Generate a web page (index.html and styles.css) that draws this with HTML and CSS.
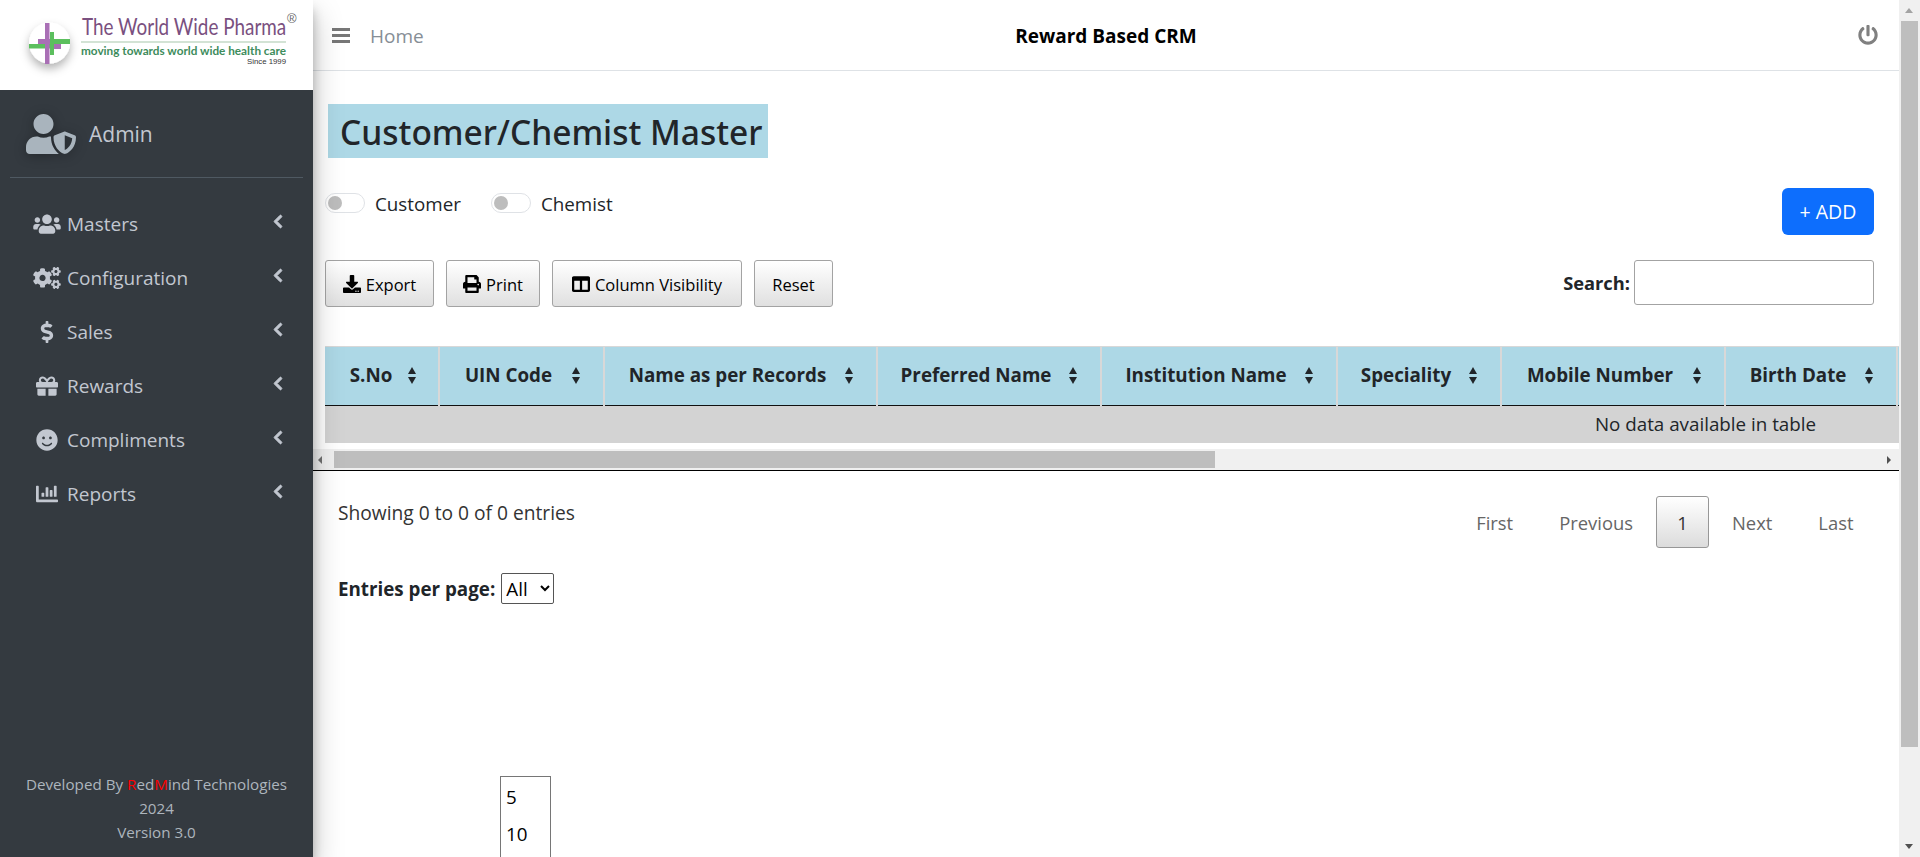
FILE: index.html
```html
<!DOCTYPE html>
<html lang="en">
<head>
    <meta charset="UTF-8">
    <meta name="viewport" content="width=device-width, initial-scale=1.0">
    <title>Customer/Chemist Master</title>
    <link rel="stylesheet" href="styles.css">
</head>
<body>
<div class="app">
    <aside class="sidebar">
        <div class="logo">
            <svg width="313" height="90" viewBox="0 0 313 90">
                <defs>
                    <filter id="logoShadow" x="-40%" y="-40%" width="180%" height="200%"><feDropShadow dx="0" dy="5" stdDeviation="5" flood-color="#000" flood-opacity=".3"/></filter>
                </defs>
                <circle cx="49.5" cy="43" r="20.5" fill="#fff" filter="url(#logoShadow)"/>
                <rect x="38" y="39" width="12" height="5" fill="#a96fb5"/>
                <rect x="50" y="44" width="11" height="5" fill="#a96fb5"/>
                <rect x="50" y="32" width="4" height="23" fill="#5cbf5e"/>
                <rect x="50" y="39" width="20" height="5" fill="#5cbf5e"/>
                <rect x="29" y="44" width="21" height="4.500" fill="#5cbf5e"/>
                <rect x="45" y="23" width="4.500" height="41" fill="#a96fb5"/>
                <text transform="translate(82 34.500) scale(.84 1)" class="logo-name">The World Wide Pharma</text>
                <text x="287" y="23" class="logo-reg">®</text>
                <rect x="81" y="41.500" width="205" height="1" fill="#a7c7ac"/>
                <text x="81" y="55" class="logo-tag" textLength="205" lengthAdjust="spacingAndGlyphs">moving towards world wide health care</text>
                <text x="247" y="64" class="logo-since" textLength="39" lengthAdjust="spacingAndGlyphs">Since 1999</text>
            </svg>
        </div>
        <div class="user">
            <svg class="user-icon" viewBox="0 0 640 512"><path d="M622.3 271.1l-115.2-45c-4.1-1.6-12.6-3.7-22.2 0l-115.2 45c-10.7 4.2-17.7 14-17.7 24.9 0 111.6 68.7 188.8 132.9 213.9 9.6 3.7 18 1.6 22.2 0C558.4 489.9 640 420.5 640 296c0-10.9-7-20.7-17.7-24.9zM496 462.4V273.3l95.5 37.3c-5.6 87.1-60.9 135.4-95.5 151.8zM224 256c70.7 0 128-57.3 128-128S294.7 0 224 0 96 57.3 96 128s57.3 128 128 128zm96 40c0-2.5.8-4.7 1.1-7.2-2.5-.1-4.9-.8-7.5-.8h-16.7c-22.2 10.2-46.9 16-72.9 16s-50.6-5.8-72.9-16h-16.7C60.2 288 0 348.2 0 422.4V464c0 26.5 21.5 48 48 48h352c6.8 0 13.3-1.5 19.2-4-54-42.9-99.2-116.7-99.2-212z"/></svg>
            <span>Admin</span>
        </div>
        <ul class="nav">
            <li>
                <svg class="nav-icon" viewBox="0 0 640 512"><path d="M96 224c35.3 0 64-28.7 64-64s-28.7-64-64-64-64 28.7-64 64 28.7 64 64 64zm448 0c35.3 0 64-28.7 64-64s-28.7-64-64-64-64 28.7-64 64 28.7 64 64 64zm32 32h-64c-17.6 0-33.5 7.1-45.1 18.6 40.3 22.1 68.9 62 75.1 109.4h66c17.7 0 32-14.3 32-32v-32c0-35.3-28.7-64-64-64zm-256 0c61.9 0 112-50.1 112-112S381.9 32 320 32 208 82.1 208 144s50.1 112 112 112zm76.8 32h-8.3c-20.8 10-43.9 16-68.5 16s-47.6-6-68.5-16h-8.3C179.6 288 128 339.6 128 403.2V432c0 26.5 21.5 48 48 48h288c26.5 0 48-21.5 48-48v-28.8c0-63.6-51.6-115.2-115.2-115.2zm-223.7-13.4C161.5 263.1 145.6 256 128 256H64c-35.3 0-64 28.7-64 64v32c0 17.7 14.3 32 32 32h65.9c6.3-47.4 34.9-87.3 75.2-109.4z"/></svg>
                <span>Masters</span>
                <svg class="chev" viewBox="0 0 320 512"><path d="M34.52 239.03L228.87 44.69c9.37-9.37 24.57-9.37 33.94 0l22.67 22.67c9.36 9.36 9.37 24.52.04 33.9L131.49 256l154.02 154.75c9.34 9.38 9.32 24.54-.04 33.9l-22.67 22.67c-9.37 9.37-24.57 9.37-33.94 0L34.52 272.97c-9.37-9.37-9.37-24.57 0-33.94z"/></svg>
            </li>
            <li>
                <svg class="nav-icon" viewBox="0 0 640 512"><path d="M512.1 191l-8.2 14.3c-3 5.3-9.4 7.5-15.1 5.4-11.8-4.4-22.6-10.7-32.1-18.6-4.6-3.8-5.8-10.5-2.8-15.7l8.2-14.3c-6.9-8-12.3-17.3-15.9-27.4h-16.5c-6 0-11.2-4.3-12.2-10.3-2-12-2.1-24.6 0-37.1 1-6 6.2-10.4 12.2-10.4h16.5c3.6-10.1 9-19.4 15.9-27.4l-8.2-14.3c-3-5.2-1.9-11.9 2.8-15.7 9.5-7.9 20.4-14.2 32.1-18.6 5.7-2.1 12.1.1 15.1 5.4l8.2 14.3c10.5-1.9 21.2-1.9 31.7 0L552 6.3c3-5.3 9.4-7.5 15.1-5.4 11.8 4.4 22.6 10.7 32.1 18.6 4.6 3.8 5.8 10.5 2.8 15.7l-8.2 14.3c6.9 8 12.3 17.3 15.9 27.4h16.5c6 0 11.2 4.3 12.2 10.3 2 12 2.1 24.6 0 37.1-1 6-6.2 10.4-12.2 10.4h-16.5c-3.6 10.1-9 19.4-15.9 27.4l8.2 14.3c3 5.2 1.9 11.9-2.8 15.7-9.5 7.9-20.4 14.2-32.1 18.6-5.7 2.1-12.1-.1-15.1-5.4l-8.2-14.3c-10.4 1.9-21.2 1.9-31.7 0zm-10.5-58.8c38.5 29.6 82.4-14.3 52.8-52.8-38.5-29.7-82.4 14.3-52.8 52.8zM386.3 286.1l33.7 16.8c10.1 5.8 14.5 18.1 10.5 29.1-8.9 24.2-26.4 46.4-42.6 65.8-7.4 8.9-20.2 11.1-30.3 5.3l-29.1-16.8c-16 13.7-34.6 24.6-54.9 31.7v33.6c0 11.6-8.3 21.6-19.7 23.6-24.6 4.2-50.4 4.4-75.9 0-11.5-2-20-11.9-20-23.6V418c-20.3-7.2-38.9-18-54.9-31.7L74 403c-10 5.8-22.9 3.6-30.3-5.3-16.2-19.4-33.3-41.6-42.2-65.7-4-10.9.4-23.2 10.5-29.1l33.3-16.8c-3.9-20.9-3.9-42.4 0-63.4L12 205.8c-10.1-5.8-14.6-18.1-10.5-29 8.9-24.2 26-46.4 42.2-65.8 7.4-8.9 20.2-11.1 30.3-5.3l29.1 16.8c16-13.7 34.6-24.6 54.9-31.7V57.1c0-11.5 8.2-21.5 19.6-23.5 24.6-4.2 50.5-4.4 76-.1 11.5 2 20 11.9 20 23.6v33.6c20.3 7.2 38.9 18 54.9 31.7l29.1-16.8c10-5.8 22.9-3.6 30.3 5.3 16.2 19.4 33.2 41.6 42.1 65.8 4 10.9.1 23.2-10 29.1l-33.7 16.8c3.9 21 3.9 42.5 0 63.5zm-117.6 21.1c59.2-77-28.7-164.9-105.7-105.7-59.2 77 28.7 164.9 105.7 105.7zm243.4 182.7l-8.2 14.3c-3 5.3-9.4 7.5-15.1 5.4-11.8-4.4-22.6-10.7-32.1-18.6-4.6-3.8-5.8-10.5-2.8-15.7l8.2-14.3c-6.9-8-12.3-17.3-15.9-27.4h-16.5c-6 0-11.2-4.3-12.2-10.3-2-12-2.1-24.6 0-37.1 1-6 6.2-10.4 12.2-10.4h16.5c3.6-10.1 9-19.4 15.9-27.4l-8.2-14.3c-3-5.2-1.9-11.9 2.8-15.7 9.5-7.9 20.4-14.2 32.1-18.6 5.7-2.1 12.1.1 15.1 5.4l8.2 14.3c10.5-1.9 21.2-1.9 31.7 0l8.2-14.3c3-5.3 9.4-7.5 15.1-5.4 11.8 4.4 22.6 10.7 32.1 18.6 4.6 3.8 5.8 10.5 2.8 15.7l-8.2 14.3c6.9 8 12.3 17.3 15.9 27.4h16.5c6 0 11.2 4.3 12.2 10.3 2 12 2.1 24.6 0 37.1-1 6-6.2 10.4-12.2 10.4h-16.5c-3.6 10.1-9 19.4-15.9 27.4l8.2 14.3c3 5.2 1.9 11.9-2.8 15.7-9.5 7.9-20.4 14.2-32.1 18.6-5.7 2.1-12.1-.1-15.1-5.4l-8.2-14.3c-10.4 1.9-21.2 1.9-31.7 0zM501.6 431c38.5 29.6 82.4-14.3 52.8-52.8-38.5-29.6-82.4 14.3-52.8 52.8z"/></svg>
                <span>Configuration</span>
                <svg class="chev" viewBox="0 0 320 512"><path d="M34.52 239.03L228.87 44.69c9.37-9.37 24.57-9.37 33.94 0l22.67 22.67c9.36 9.36 9.37 24.52.04 33.9L131.49 256l154.02 154.75c9.34 9.38 9.32 24.54-.04 33.9l-22.67 22.67c-9.37 9.37-24.57 9.37-33.94 0L34.52 272.97c-9.37-9.37-9.37-24.57 0-33.94z"/></svg>
            </li>
            <li>
                <svg class="nav-icon" viewBox="-176 0 640 512"><path d="M209.2 233.4l-108-31.6C88.7 198.2 80 186.5 80 173.5c0-16.3 13.2-29.5 29.5-29.5h66.3c12.2 0 24.2 3.7 34.2 10.5 6.1 4.1 14.3 3.1 19.5-2l34.8-34c7.1-6.9 6.1-18.4-1.8-24.5C238 74.8 207.4 64.1 176 64V16c0-8.8-7.2-16-16-16h-32c-8.8 0-16 7.2-16 16v48h-2.5C45.8 64-5.4 118.7.5 183.6c4.2 46.1 39.4 83.6 83.8 96.6l102.5 30c12.5 3.7 21.2 15.3 21.2 28.3 0 16.3-13.2 29.500-29.500 29.500h-66.3C100 368 88 364.3 78 357.5c-6.1-4.1-14.3-3.1-19.5 2l-34.8 34c-7.1 6.9-6.1 18.4 1.800 24.5 24.5 19.2 55.1 29.9 86.5 30v48c0 8.8 7.2 16 16 16h32c8.8 0 16-7.2 16-16v-48.2c46.6-.9 90.3-28.6 105.7-72.7 21.5-61.6-14.6-124.8-72.5-141.7z"/></svg>
                <span>Sales</span>
                <svg class="chev" viewBox="0 0 320 512"><path d="M34.52 239.03L228.87 44.69c9.37-9.37 24.57-9.37 33.94 0l22.67 22.67c9.36 9.36 9.37 24.52.04 33.9L131.49 256l154.02 154.75c9.34 9.38 9.32 24.54-.04 33.9l-22.67 22.67c-9.37 9.37-24.57 9.37-33.94 0L34.52 272.97c-9.37-9.37-9.37-24.57 0-33.94z"/></svg>
            </li>
            <li>
                <svg class="nav-icon" viewBox="-64 0 640 512"><path d="M32 448c0 17.7 14.3 32 32 32h160V320H32v128zm256 32h160c17.7 0 32-14.3 32-32V320H288v160zm192-320h-42.1c6.2-12.1 10.1-25.5 10.1-40 0-48.5-39.5-88-88-88-41.6 0-68.5 21.3-103 68.3-34.5-47-61.4-68.3-103-68.3-48.5 0-88 39.5-88 88 0 14.5 3.8 27.9 10.1 40H32c-17.7 0-32 14.3-32 32v80c0 8.8 7.2 16 16 16h480c8.8 0 16-7.2 16-16v-80c0-17.7-14.3-32-32-32zm-326.1 0c-22.1 0-40-17.9-40-40s17.9-40 40-40c19.9 0 34.6 3.3 86.1 80h-86.1zm206.1 0h-86.1c51.4-76.5 65.7-80 86.1-80 22.1 0 40 17.9 40 40s-17.9 40-40 40z"/></svg>
                <span>Rewards</span>
                <svg class="chev" viewBox="0 0 320 512"><path d="M34.52 239.03L228.87 44.69c9.37-9.37 24.57-9.37 33.94 0l22.67 22.67c9.36 9.36 9.37 24.52.04 33.9L131.49 256l154.02 154.75c9.34 9.38 9.32 24.54-.04 33.9l-22.67 22.67c-9.37 9.37-24.57 9.37-33.94 0L34.52 272.97c-9.37-9.37-9.37-24.57 0-33.94z"/></svg>
            </li>
            <li>
                <svg class="nav-icon" viewBox="-72 0 640 512"><path d="M248 8C111 8 0 119 0 256s111 248 248 248 248-111 248-248S385 8 248 8zm80 168c17.7 0 32 14.3 32 32s-14.3 32-32 32-32-14.3-32-32 14.3-32 32-32zm-160 0c17.7 0 32 14.3 32 32s-14.3 32-32 32-32-14.3-32-32 14.3-32 32-32zm194.8 170.2C334.3 380.4 292.5 400 248 400s-86.3-19.6-114.8-53.8c-13.6-16.3 11-36.7 24.6-20.5 22.4 26.9 55.2 42.2 90.2 42.2s67.8-15.4 90.2-42.2c13.4-16.2 38.1 4.2 24.6 20.5z"/></svg>
                <span>Compliments</span>
                <svg class="chev" viewBox="0 0 320 512"><path d="M34.52 239.03L228.87 44.69c9.37-9.37 24.57-9.37 33.94 0l22.67 22.67c9.36 9.36 9.37 24.52.04 33.9L131.49 256l154.02 154.75c9.34 9.38 9.32 24.54-.04 33.9l-22.67 22.67c-9.37 9.37-24.57 9.37-33.94 0L34.52 272.97c-9.37-9.37-9.37-24.57 0-33.94z"/></svg>
            </li>
            <li>
                <svg class="nav-icon" viewBox="-64 0 640 512"><path d="M332.8 320h38.4c6.4 0 12.8-6.4 12.8-12.8V172.8c0-6.4-6.4-12.8-12.8-12.8h-38.4c-6.4 0-12.8 6.4-12.8 12.8v134.4c0 6.4 6.4 12.8 12.8 12.8zm96 0h38.4c6.4 0 12.8-6.4 12.8-12.8V76.8c0-6.4-6.4-12.8-12.8-12.8h-38.4c-6.4 0-12.8 6.4-12.8 12.8v230.4c0 6.4 6.4 12.8 12.8 12.8zm-288 0h38.4c6.4 0 12.8-6.4 12.8-12.8v-70.4c0-6.4-6.4-12.8-12.8-12.8h-38.4c-6.4 0-12.8 6.4-12.8 12.8v70.4c0 6.4 6.4 12.8 12.8 12.8zm96 0h38.4c6.4 0 12.8-6.4 12.8-12.8V108.8c0-6.4-6.4-12.8-12.8-12.8h-38.4c-6.4 0-12.8 6.4-12.8 12.8v198.4c0 6.4 6.4 12.8 12.8 12.8zM496 384H64V80c0-8.84-7.16-16-16-16H16C7.16 64 0 71.16 0 80v336c0 17.67 14.33 32 32 32h464c8.84 0 16-7.16 16-16v-32c0-8.84-7.16-16-16-16z"/></svg>
                <span>Reports</span>
                <svg class="chev" viewBox="0 0 320 512"><path d="M34.52 239.03L228.87 44.69c9.37-9.37 24.57-9.37 33.94 0l22.67 22.67c9.36 9.36 9.37 24.52.04 33.9L131.49 256l154.02 154.75c9.34 9.38 9.32 24.54-.04 33.9l-22.67 22.67c-9.37 9.37-24.57 9.37-33.94 0L34.52 272.97c-9.37-9.37-9.37-24.57 0-33.94z"/></svg>
            </li>
        </ul>
        <div class="credits">
            <div>Developed By <b>R</b>ed<b>M</b>ind Technologies</div>
            <div>2024</div>
            <div>Version 3.0</div>
        </div>
    </aside>

    <main class="main">
        <div class="topbar">
            <svg class="bars" viewBox="0 0 18 15"><rect width="18" height="3"/><rect y="6" width="18" height="3"/><rect y="12" width="18" height="3"/></svg>
            <span class="home">Home</span>
            <span class="crm">Reward Based CRM</span>
            <svg class="power" viewBox="0 0 512 512"><path d="M400 54.1c63 45 104 118.6 104 201.9 0 136.8-110.8 247.7-247.5 248C120 504.3 8.2 393 8 256.4 7.9 173.1 48.9 99.3 111.8 54.2c11.7-8.3 28-4.8 35 7.7L162.6 90c5.9 10.5 3.1 23.8-6.6 31-41.5 30.8-68 79.6-68 134.9-.1 92.3 74.5 168.1 168 168.1 91.6 0 168.6-74.2 168-169.1-.3-51.8-24.7-101.8-68.1-134-9.7-7.2-12.4-20.5-6.5-30.9l15.8-28.1c7-12.4 23.2-16.1 34.8-7.8zM296 264V24c0-13.3-10.7-24-24-24h-32c-13.3 0-24 10.7-24 24v240c0 13.3 10.7 24 24 24h32c13.3 0 24-10.7 24-24z"/></svg>
        </div>

        <div class="title-row"><h2 class="title">Customer/Chemist Master</h2></div>

        <div class="filter-row">
            <label class="check"><span class="toggle"></span>Customer</label>
            <label class="check"><span class="toggle"></span>Chemist</label>
            <button class="add-btn">+ ADD</button>
        </div>

        <div class="tools-row">
            <button class="dt-btn btn-export">
                <svg viewBox="0 0 512 512"><path d="M216 0h80c13.3 0 24 10.7 24 24v168h87.7c17.8 0 26.7 21.5 14.1 34.1L269.7 378.3c-7.5 7.5-19.8 7.5-27.3 0L90.1 226.1c-12.6-12.6-3.7-34.1 14.1-34.1H192V24c0-13.3 10.7-24 24-24zm296 376v112c0 13.3-10.7 24-24 24H24c-13.3 0-24-10.7-24-24V376c0-13.3 10.7-24 24-24h146.7l49 49c20.1 20.1 52.5 20.1 72.6 0l49-49H488c13.3 0 24 10.7 24 24zm-124 88c0-11-9-20-20-20s-20 9-20 20 9 20 20 20 20-9 20-20zm64 0c0-11-9-20-20-20s-20 9-20 20 9 20 20 20 20-9 20-20z"/></svg>
                Export
            </button>
            <button class="dt-btn btn-print">
                <svg viewBox="0 0 512 512"><path d="M448 192V77.25c0-8.49-3.37-16.62-9.37-22.63L393.37 9.37c-6-6-14.14-9.37-22.63-9.37H96C78.33 0 64 14.33 64 32v160c-35.35 0-64 28.65-64 64v112c0 8.84 7.16 16 16 16h48v96c0 17.67 14.33 32 32 32h320c17.67 0 32-14.33 32-32v-96h48c8.84 0 16-7.16 16-16V256c0-35.35-28.65-64-64-64zm-64 256H128v-96h256v96zm0-224H128V64h192v48c0 8.84 7.16 16 16 16h48v96zm48 72c-13.25 0-24-10.75-24-24 0-13.26 10.75-24 24-24s24 10.74 24 24c0 13.25-10.75 24-24 24z"/></svg>
                Print
            </button>
            <button class="dt-btn btn-cols">
                <svg viewBox="0 0 512 512"><path d="M464 32H48C21.49 32 0 53.49 0 80v352c0 26.51 21.49 48 48 48h416c26.51 0 48-21.49 48-48V80c0-26.51-21.49-48-48-48zM224 416H64V160h160v256zm224 0H288V160h160v256z"/></svg>
                Column Visibility
            </button>
            <button class="dt-btn btn-reset">Reset</button>
            <label class="search"><b>Search:</b><input type="text"></label>
        </div>

        <div class="table-area">
            <table class="grid">
                <thead>
                    <tr>
                        <th class="c-sno">S.No<i class="sort"></i></th>
                        <th class="c-uin">UIN Code<i class="sort"></i></th>
                        <th class="c-name">Name as per Records<i class="sort"></i></th>
                        <th class="c-pref">Preferred Name<i class="sort"></i></th>
                        <th class="c-inst">Institution Name<i class="sort"></i></th>
                        <th class="c-spec">Speciality<i class="sort"></i></th>
                        <th class="c-mob">Mobile Number<i class="sort"></i></th>
                        <th class="c-birth">Birth Date<i class="sort"></i></th>
                        <th class="c-rest"></th>
                    </tr>
                </thead>
                <tbody>
                    <tr><td colspan="9">No data available in table</td></tr>
                </tbody>
            </table>
        </div>
        <div class="h-scroll">
            <i class="arrow arrow-left"></i>
            <div class="h-thumb"></div>
            <i class="arrow arrow-right"></i>
        </div>

        <div class="info-row">
            <span class="info">Showing 0 to 0 of 0 entries</span>
            <div class="pager">
                <a>First</a>
                <a>Previous</a>
                <a class="current">1</a>
                <a>Next</a>
                <a>Last</a>
            </div>
        </div>

        <div class="length-row">
            <b>Entries per page:</b>
            <select class="length-select"><option>All</option></select>
        </div>

        <ul class="length-list">
            <li>5</li>
            <li>10</li>
        </ul>
    </main>

    <div class="v-scroll">
        <i class="arrow arrow-up"></i>
        <div class="v-thumb"></div>
        <i class="arrow arrow-down"></i>
    </div>
</div>
</body>
</html>
```

FILE: styles.css
```css
* { box-sizing: border-box; }
html, body { margin: 0; height: 100%; overflow: hidden; }
body { font-family: "Open Sans", "Noto Sans", sans-serif; font-size: 18.8px; color: #212529; background: #fff; }
ul { list-style: none; margin: 0; padding: 0; }

.app { display: flex; height: 857px; overflow: hidden; }

/* sidebar */
.sidebar { width: 313px; flex: none; display: flex; flex-direction: column; background: #343a40; position: relative; z-index: 2; box-shadow: 0 14px 28px rgba(0,0,0,.25), 0 10px 10px rgba(0,0,0,.22); }
.logo { height: 90px; background: #fff; }
.logo svg { display: block; }
.logo-name { font-family: Lato, sans-serif; font-size: 22.5px; font-weight: 400; fill: #7a5080; }
.logo-reg { font-family: "Liberation Sans", sans-serif; font-size: 13px; fill: #666; }
.logo-tag { font-family: Lato, sans-serif; font-size: 10.5px; font-weight: 700; fill: #3d8c5c; }
.logo-since { font-family: "Liberation Sans", sans-serif; font-size: 8px; fill: #333; }
.user { height: 88px; margin: 0 10px; padding-left: 16px; border-bottom: 1px solid #4f5962; display: flex; align-items: center; gap: 13px; color: #c2c7d0; font-size: 21px; }
.user-icon { width: 50px; height: 40px; fill: #a9b4bd; filter: drop-shadow(0 2px 6px rgba(0,0,0,.3)); }
.nav { padding-top: 19px; }
.nav li { height: 54px; padding: 0 30px 0 33px; display: flex; align-items: center; color: #c2c7d0; font-size: 19px; }
.nav-icon { width: 28px; height: 22px; flex: none; fill: #c2c7d0; margin-right: 6px; }
.nav li span { flex: 1; }
.chev { width: 10px; height: 15px; fill: #c2c7d0; stroke: #c2c7d0; stroke-width: 30; margin-top: -5px; }
.credits { margin-top: auto; padding-bottom: 13px; text-align: center; font-size: 15.2px; line-height: 24px; color: #adb5bd; }
.credits b { font-weight: 400; color: #f00; }

/* main */
.main { flex: 1; min-width: 0; overflow: hidden; }
.topbar { height: 71px; padding: 0 21px 0 19px; border-bottom: 1px solid #dee2e6; display: flex; align-items: center; position: relative; }
.bars { width: 18px; height: 15px; fill: #777; }
.home { margin-left: 20px; padding-top: 2px; font-size: 19px; color: #868e96; }
.crm { position: absolute; left: 0; right: 0; padding-top: 2px; text-align: center; font-weight: 700; font-size: 19px; color: #000; }
.power { width: 20px; height: 20px; margin-left: auto; fill: #808080; }

.title-row { padding: 33px 0 0 15px; }
.title { display: inline-block; margin: 0; width: 440px; height: 54px; padding: 0 12px; background: #add8e6; font-family: "Noto Sans", sans-serif; font-size: 33.5px; font-weight: 500; line-height: 56px; white-space: nowrap; }

.filter-row { margin-top: 30px; padding: 0 25px 0 12px; display: flex; align-items: flex-start; height: 47px; }
.check { display: flex; align-items: center; gap: 10px; margin: 5px 30px 0 0; height: 22px; }
.toggle { width: 40px; height: 20px; margin-top: -2px; border: 1px solid #dfe2e6; border-radius: 10px; background: #fff; position: relative; }
.toggle::before { content: ""; position: absolute; left: 2px; top: 2px; width: 14px; height: 14px; border-radius: 50%; background: #bdbdbd; }
.add-btn { margin-left: auto; width: 92px; height: 47px; border: 0; border-radius: 6px; background: #0d6efd; color: #fff; font: inherit; font-size: 19.5px; }

.tools-row { margin-top: 25px; padding: 0 25px 0 12px; display: flex; align-items: flex-start; height: 47px; }
.dt-btn { height: 47px; margin-right: 12px; padding: 1px 0 0; border: 1px solid #a3a3a3; border-radius: 3px; background: linear-gradient(#fff, #e0e0e0); color: #000; font: inherit; font-size: 16.5px; display: flex; align-items: center; justify-content: center; gap: 5px; }
.dt-btn svg { width: 18px; height: 18px; }
.btn-export { width: 109px; }
.btn-print { width: 94px; }
.btn-cols { width: 190px; }
.btn-reset { width: 79px; margin-right: 0; }
.search { margin-left: auto; display: flex; align-items: center; gap: 4px; height: 45px; }
.search b { font-size: 18.3px; }
.search input { width: 240px; height: 45px; border: 1px solid #a3a3a3; border-radius: 3px; background: #fff; }

/* table */
.table-area { margin-top: 39px; padding-left: 12px; overflow: hidden; height: 103px; }
.grid { width: 2762px; table-layout: fixed; border-collapse: collapse; }
.grid th { height: 59px; padding: 0 38px 2px 12px; position: relative; background: #add8e6; border: 2px solid #d8d8d8; border-width: 1px 2px 0 0; border-bottom: 1px solid #111; font-size: 18.8px; font-weight: 700; text-align: center; white-space: nowrap; }
.grid td { height: 37px; padding: 0; background: #d3d3d3; text-align: center; }
.c-sno { width: 114px; }
.c-uin { width: 165px; }
.c-name { width: 273px; }
.c-pref { width: 224px; }
.c-inst { width: 236px; }
.c-spec { width: 164px; }
.c-mob { width: 224px; }
.c-birth { width: 172px; }
.grid .c-sno { padding-right: 33px; }
.sort { position: absolute; right: 22px; top: 20px; width: 9px; height: 17px; }
.c-sno .sort { right: 21px; }
.sort::before, .sort::after { content: ""; position: absolute; left: 0; border-left: 4.500px solid transparent; border-right: 4.500px solid transparent; }
.sort::before { top: 0; border-bottom: 7px solid #212529; }
.sort::after { bottom: 0; border-top: 7px solid #212529; }

/* scrollbars */
.arrow { position: absolute; width: 0; height: 0; border: 4px solid transparent; }
.h-scroll { height: 22px; background: #f0f0f0; border-bottom: 1px solid #000; position: relative; }
.h-thumb { position: absolute; left: 21px; top: 2px; width: 881px; height: 17px; background: #bebebe; }
.arrow-left { left: 5px; top: 7px; border-right-color: #707070; border-left-width: 0; }
.arrow-right { right: 8px; top: 7px; border-left-color: #505050; border-right-width: 0; }
.v-scroll { width: 21px; flex: none; background: #f0f0f0; position: relative; }
.v-thumb { position: absolute; left: 2px; right: 2px; top: 21px; height: 726px; background: #bebebe; }
.arrow-up { left: 6px; top: 8px; border-width: 0 4.500px 5px; border-bottom-color: #a3a3a3; }
.arrow-down { left: 6px; bottom: 8px; border-width: 5px 4.500px 0; border-top-color: #505050; }

/* below table */
.info-row { margin-top: 25px; padding: 0 22.500px 0 25px; display: flex; justify-content: space-between; align-items: flex-start; height: 52px; }
.info { margin-top: 3px; font-size: 19.2px; color: #333; }
.pager { display: flex; font-size: 18.4px; }
.pager a { height: 52px; padding: 0 22px; display: flex; align-items: center; color: #666; border: 1px solid transparent; border-radius: 3px; }
.pager .current { width: 53px; padding: 0; justify-content: center; color: #333; border-color: #979797; background: linear-gradient(#fff, #dcdcdc); }

.length-row { margin-top: 25px; padding-left: 25px; display: flex; align-items: center; gap: 6px; height: 31px; }
.length-select { width: 53px; height: 31px; padding: 0; border: 1px solid #555; border-radius: 2px; background: #fff; color: #000; font: inherit; }

.length-list { width: 51px; height: 90px; margin: 172px 0 0 187px; padding: 2px 0 0 5px; border: 1px solid #767676; color: #000; }
.length-list li { height: 37px; line-height: 37px; }
```
